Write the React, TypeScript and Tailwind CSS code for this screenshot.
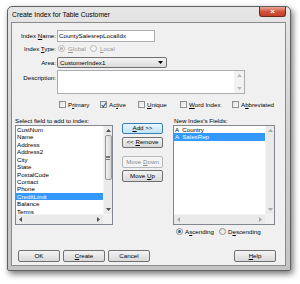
import React from "react";

const FONT = "font-['Liberation_Sans',Arial,sans-serif]";

function Tri({ dir, color = "#5a5a5a" }: { dir: "up" | "down" | "left" | "right"; color?: string }) {
  const d =
    dir === "up"
      ? "M0 3 L2.5 0 L5 3 Z"
      : dir === "down"
      ? "M0 0 L5 0 L2.5 3 Z"
      : dir === "left"
      ? "M3 0 L3 5 L0 2.5 Z"
      : "M0 0 L3 2.5 L0 5 Z";
  const w = dir === "up" || dir === "down" ? 5 : 3;
  const h = dir === "up" || dir === "down" ? 3 : 5;
  return (
    <svg width={w} height={h} viewBox={`0 0 ${w} ${h}`}>
      <path d={d} fill={color} />
    </svg>
  );
}

function U({ children }: { children: React.ReactNode }) {
  return <span className="underline underline-offset-[1px] decoration-[0.5px]">{children}</span>;
}

function Check({ checked }: { checked?: boolean }) {
  return (
    <span className="relative w-[7px] h-[7px] shrink-0 border border-[#8f8f8f] bg-gradient-to-br from-[#dedede] to-[#ffffff] flex items-center justify-center">
      {checked && (
        <svg width="6" height="6" viewBox="0 0 6 6" className="absolute left-[0px] top-[0px]">
          <path d="M0.8 3.2 L2.3 4.8 L5.2 0.8" stroke="#2a4f8a" strokeWidth="1.1" fill="none" />
        </svg>
      )}
    </span>
  );
}

function Radio({ checked, disabled }: { checked?: boolean; disabled?: boolean }) {
  return (
    <span
      className={`w-[7px] h-[7px] shrink-0 rounded-full border ${
        disabled ? "border-[#b8b8b8] bg-[#f4f4f4]" : "border-[#8f8f8f] bg-gradient-to-br from-[#dedede] to-[#ffffff]"
      } flex items-center justify-center`}
    >
      {checked && (
        <span
          className={`w-[3px] h-[3px] rounded-full ${disabled ? "bg-[#b4b4b4]" : "bg-[#2b62a6]"}`}
        />
      )}
    </span>
  );
}

function Btn({
  children,
  kind = "normal",
  className = "",
}: {
  children: React.ReactNode;
  kind?: "normal" | "focus" | "disabled";
  className?: string;
}) {
  const cls =
    kind === "focus"
      ? "border-[#3c7fb1] bg-gradient-to-b from-[#eaf6fd] to-[#bfe3f8] text-black"
      : kind === "disabled"
      ? "border-[#b5b8ba] bg-[#f4f4f4] text-[#8a8a8a]"
      : "border-[#707070] bg-gradient-to-b from-[#f4f4f4] to-[#d9d9d9] text-black";
  return (
    <div
      className={`h-[11px] shrink-0 rounded-[2px] border flex items-center justify-center leading-none ${cls} ${className}`}
    >
      {children}
    </div>
  );
}

function VScroll({
  thumb,
  arrowColor,
}: {
  thumb?: boolean;
  arrowColor: string;
}) {
  return (
    <div className="w-[9px] shrink-0 h-full bg-[#eaeaea] border-l border-[#f4f4f4] flex flex-col">
      <div className="h-[9px] flex items-center justify-center shrink-0">
        <Tri dir="up" color={arrowColor} />
      </div>
      {thumb ? (
        <div className="h-[45px] mx-[0.5px] rounded-[2px] border border-[#9a9a9a] bg-gradient-to-r from-[#f2f2f2] to-[#d6d6d6] flex flex-col items-center justify-center gap-[1px]">
          <span className="w-[4px] h-[0.5px] bg-[#777]" />
          <span className="w-[4px] h-[0.5px] bg-[#777]" />
          <span className="w-[4px] h-[0.5px] bg-[#777]" />
        </div>
      ) : null}
      <div className="flex-1" />
      <div className="h-[9px] flex items-center justify-center shrink-0">
        <Tri dir="down" color={arrowColor} />
      </div>
    </div>
  );
}

function HScroll({ arrowColor }: { arrowColor: string }) {
  return (
    <div className="h-[10px] shrink-0 flex border-t border-[#f4f4f4]">
      <div className="flex-1 bg-[#eaeaea] flex items-center justify-between px-[3px]">
        <Tri dir="left" color={arrowColor} />
        <Tri dir="right" color={arrowColor} />
      </div>
      <div className="w-[9px] bg-[#f0f0f0]" />
    </div>
  );
}

function ListBox({
  items,
  selected,
  thumb,
  arrowColor,
  w,
}: {
  items: string[];
  selected: number;
  thumb?: boolean;
  arrowColor: string;
  w: string;
}) {
  return (
    <div className={`${w} h-[100px] border border-[#828790] bg-white flex flex-col`}>
      <div className="flex-1 flex min-h-0">
        <div className="flex-1 overflow-hidden">
          {items.map((it, i) => (
            <div
              key={i}
              className={`h-[7.43px] leading-[7.43px] pl-[1px] whitespace-pre ${
                i === selected ? "bg-[#3399ff] text-white" : "text-black"
              }`}
            >
              {it}
            </div>
          ))}
        </div>
        <VScroll thumb={thumb} arrowColor={arrowColor} />
      </div>
      <HScroll arrowColor={arrowColor} />
    </div>
  );
}

export default function App() {
  const fields = [
    "CustNum",
    "Name",
    "Address",
    "Address2",
    "City",
    "State",
    "PostalCode",
    "Contact",
    "Phone",
    "CreditLimit",
    "Balance",
    "Terms",
  ];
  return (
    <div className={`w-[300px] h-[284px] bg-white relative overflow-hidden ${FONT} text-[6.2px] text-black`}>
      <div className="absolute left-[7px] top-[6px] w-[284px] h-[265px] rounded-t-[5px] rounded-b-[2px] border border-[#5f5f5f] bg-gradient-to-b from-[#e6e6e6] via-[#cfcfcf] to-[#c4c4c4] shadow-[2px_3px_6px_rgba(0,0,0,0.55)] flex flex-col">
        {/* Title bar */}
        <div className="h-[15px] shrink-0 flex items-start">
          <div className="pl-[4px] pt-[4px] text-[6.8px] leading-[8px] text-black">
            Create Index for Table Customer
          </div>
          <div className="ml-auto mr-[4px] mt-[0px] w-[27px] h-[10px] rounded-b-[3px] border border-t-0 border-[#6b2a20] bg-gradient-to-b from-[#e9a797] via-[#d0533d] to-[#c5402a] flex items-center justify-center">
            <span className="text-white text-[8px] leading-none font-bold">×</span>
          </div>
        </div>
        {/* Client area */}
        <div className="ml-[3px] mr-[4px] mb-[4px] flex-1 border border-[#8b8b8b] bg-[#f0f0f0] flex flex-col">
          {/* Index Name */}
          <div className="mt-[7px] h-[12px] flex items-center">
            <div className="w-[45px] text-right pr-[1px]">
              Index <U>N</U>ame:
            </div>
            <div className="w-[98px] h-[12px] border border-[#abadb3] bg-white flex items-center pl-[1px]">
              CountySalesrepLocalIdx
            </div>
          </div>
          {/* Index Type */}
          <div className="mt-[1px] h-[12px] flex items-center">
            <div className="w-[45px] text-right pr-[1px]">
              Index <U>T</U>ype:
            </div>
            <div className="flex items-center w-[33px] gap-[3px] pl-[1px] text-[#9a9a9a]">
              <Radio checked disabled />
              <span>
                <U>G</U>lobal
              </span>
            </div>
            <div className="flex items-center gap-[3px] text-[#9a9a9a]">
              <Radio disabled />
              <span>
                <U>L</U>ocal
              </span>
            </div>
          </div>
          {/* Area */}
          <div className="mt-[2px] h-[11px] flex items-center">
            <div className="w-[45px] text-right pr-[1px]">Area:</div>
            <div className="w-[110px] h-[11px] rounded-[2px] border border-[#707070] bg-gradient-to-b from-[#f4f4f4] to-[#dcdcdc] flex items-center pl-[2px] pr-[3px]">
              <span className="flex-1">CustomerIndex1</span>
              <Tri dir="down" color="#000" />
            </div>
          </div>
          {/* Description */}
          <div className="mt-[2px] h-[24px] flex items-start">
            <div className="w-[45px] text-right pr-[1px] pt-[3px]">Description:</div>
            <div className="w-[188px] h-[24px] border border-[#abadb3] bg-white flex justify-end">
              <div className="w-[10px] h-full bg-[#f2f2f2] flex flex-col items-center justify-between py-[3px]">
                <Tri dir="up" color="#b9b9b9" />
                <Tri dir="down" color="#b9b9b9" />
              </div>
            </div>
          </div>
          {/* Checkboxes */}
          <div className="mt-[6px] h-[10px] flex items-center pl-[47px]">
            <div className="w-[41px] flex items-center gap-[2px]">
              <Check />
              <span>
                P<U>r</U>imary
              </span>
            </div>
            <div className="w-[38px] flex items-center gap-[2px]">
              <Check checked />
              <span>
                Ac<U>t</U>ive
              </span>
            </div>
            <div className="w-[42px] flex items-center gap-[2px]">
              <Check />
              <span>
                <U>U</U>nique
              </span>
            </div>
            <div className="w-[52px] flex items-center gap-[2px]">
              <Check />
              <span>
                <U>W</U>ord Index
              </span>
            </div>
            <div className="flex items-center gap-[2px]">
              <Check />
              <span>
                A<U>b</U>breviated
              </span>
            </div>
          </div>
          {/* Lists area */}
          <div className="mt-[6px] flex items-start">
            <div className="ml-[3px] w-[98px] flex flex-col">
              <div className="h-[9px] leading-[9px]">Select field to add to index:</div>
              <ListBox items={fields} selected={9} thumb arrowColor="#505050" w="w-[98px]" />
            </div>
            <div className="ml-[9px] w-[41px] pt-[7px] flex flex-col">
              <Btn kind="focus">
                <span>
                  <U>A</U>dd &gt;&gt;
                </span>
              </Btn>
              <Btn className="mt-[3px]">
                <span>
                  &lt;&lt; <U>R</U>emove
                </span>
              </Btn>
              <Btn kind="disabled" className="mt-[8px] h-[12px]">
                <span>
                  Move <U>D</U>own
                </span>
              </Btn>
              <Btn className="mt-[2px] h-[12px]">
                <span>
                  Move <U>U</U>p
                </span>
              </Btn>
            </div>
            <div className="ml-[10px] w-[102px] flex flex-col">
              <div className="h-[9px] leading-[9px] pl-[1px]">New Index's Fields:</div>
              <ListBox
                items={["A  Country", "A  SalesRep"]}
                selected={1}
                arrowColor="#a8a8a8"
                w="w-[102px]"
              />
              <div className="mt-[2px] h-[10px] flex items-center pl-[3px]">
                <div className="w-[43px] flex items-center gap-[2px]">
                  <Radio checked />
                  <span>
                    A<U>s</U>cending
                  </span>
                </div>
                <div className="flex items-center gap-[2px]">
                  <Radio />
                  <span>
                    D<U>e</U>scending
                  </span>
                </div>
              </div>
            </div>
          </div>
          {/* Bottom buttons */}
          <div className="mt-[13px] h-[12px] flex items-center pl-[6px] pr-[9px] gap-[3px]">
            <Btn className="w-[42px] h-[12px]">OK</Btn>
            <Btn className="w-[42px] h-[12px]">
              <span>
                <U>C</U>reate
              </span>
            </Btn>
            <Btn className="w-[42px] h-[12px]">Cancel</Btn>
            <Btn className="w-[42px] h-[12px] ml-auto">
              <span>
                <U>H</U>elp
              </span>
            </Btn>
          </div>
        </div>
      </div>
    </div>
  );
}
